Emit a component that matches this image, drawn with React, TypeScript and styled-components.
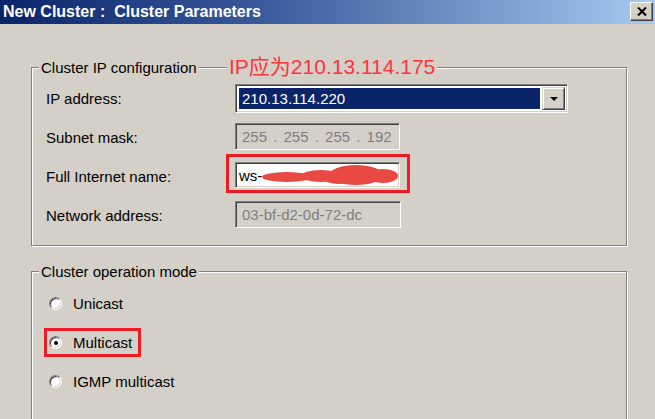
import React from 'react'
import styled, { createGlobalStyle } from 'styled-components'

const GlobalStyle = createGlobalStyle`
  html, body {
    margin: 0;
    padding: 0;
    background: #d4d0c8;
  }
  body {
    font-family: 'Liberation Sans', Arial, sans-serif;
  }
`

const Window = styled.div`
  width: 655px;
  height: 419px;
  overflow: hidden;
  background: #d4d0c8;
  color: #000;
  font-size: 15px;
`

const TitleBar = styled.div`
  height: 24px;
  display: flex;
  align-items: center;
  justify-content: space-between;
  padding: 0 2px 0 3px;
  background: linear-gradient(to right, #0a246a 0%, #3a5a9c 40%, #a6caf0 100%);
`

const Title = styled.span`
  color: #fff;
  font-weight: bold;
  font-size: 16px;
  white-space: pre;
`

const CloseButton = styled.button`
  width: 23px;
  height: 19px;
  padding: 0;
  display: flex;
  align-items: center;
  justify-content: center;
  background: #d4d0c8;
  border: 1px solid;
  border-color: #fff #404040 #404040 #fff;
  box-shadow: inset -1px -1px 0 #808080;
  margin-top: -2px;
`

const Content = styled.div`
  padding: 43px 28px 0 31px;
`

const GroupBox = styled.div<{ $gap?: number }>`
  position: relative;
  margin-top: ${(p) => p.$gap ?? 0}px;
  border: 1px solid #808080;
  box-shadow: 1px 1px 0 #fff, inset 1px 1px 0 #fff;
  padding: 0 14px 15px 14px;
  min-height: 160px;
`

const Legend = styled.div`
  display: table;
  margin: -9px 0 0 -7px;
  padding: 0 2px;
  line-height: 17px;
  background: #d4d0c8;
`

const Annotation = styled.span`
  position: absolute;
  left: 195px;
  top: -12px;
  padding: 0 2px;
  background: #d4d0c8;
  color: #ff3340;
  font-size: 21px;
  line-height: 22px;
  font-family: 'Liberation Sans', 'Noto Sans CJK SC', sans-serif;
`

const FieldGrid = styled.div`
  display: grid;
  grid-template-columns: 189px 1fr;
  grid-auto-rows: 29px;
  row-gap: 10px;
  margin-top: 8px;
`

const Label = styled.span`
  align-self: center;
  line-height: 17px;
`

const sunken = `
  box-sizing: border-box;
  border: 1px solid;
  border-color: #808080 #fff #fff #808080;
  box-shadow: inset 1px 1px 0 #404040, inset -1px -1px 0 #d4d0c8;
`

const Combo = styled.div`
  ${sunken}
  width: 333px;
  height: 29px;
  display: flex;
  align-items: stretch;
  padding: 2px;
  background: #fff;
`

const ComboValue = styled.div`
  flex: 1;
  margin: 1px 2px 1px 1px;
  padding-left: 3px;
  background: #0a246a;
  color: #fff;
  display: flex;
  align-items: center;
`

const DropButton = styled.div`
  width: 21px;
  display: flex;
  align-items: center;
  justify-content: center;
  background: #d4d0c8;
  border: 1px solid;
  border-color: #d4d0c8 #404040 #404040 #d4d0c8;
  box-shadow: inset 1px 1px 0 #fff, inset -1px -1px 0 #808080;
`

const Arrow = styled.span`
  width: 0;
  height: 0;
  border-left: 4px solid transparent;
  border-right: 4px solid transparent;
  border-top: 4px solid #000;
`

const TextField = styled.div<{ $disabled?: boolean; $width: number; $height: number; $marked?: boolean }>`
  ${sunken}
  position: relative;
  width: ${(p) => p.$width}px;
  height: ${(p) => p.$height}px;
  padding-left: ${(p) => (p.$disabled ? 6 : 3)}px;
  display: flex;
  align-items: center;
  background: ${(p) => (p.$disabled ? '#d4d0c8' : '#fff')};
  color: ${(p) => (p.$disabled ? '#808080' : '#000')};
  white-space: pre;

  ${(p) =>
    p.$marked &&
    `
    &::after {
      content: '';
      position: absolute;
      top: -9px;
      left: -10px;
      right: -11px;
      bottom: -6px;
      border: 3px solid #ec1c24;
    }
  `}
`

const IpText = styled.span`
  word-spacing: 2px;
`

const Redaction = styled.svg`
  position: absolute;
  left: 25px;
  top: 1px;
`

const RadioList = styled.div`
  display: flex;
  flex-direction: column;
  align-items: flex-start;
  gap: 16px;
  margin-top: 12px;
  margin-left: 1px;
`

const RadioItem = styled.label<{ $marked?: boolean }>`
  display: inline-flex;
  align-items: center;
  gap: 11px;
  height: 23px;
  padding: 0 6px 0 2px;
  box-sizing: border-box;
  outline: ${(p) => (p.$marked ? '3px solid #ec1c24' : 'none')};
`

const RadioCircle = styled.span<{ $checked?: boolean }>`
  box-sizing: border-box;
  width: 13px;
  height: 13px;
  border-radius: 50%;
  background: #fff;
  border: 1px solid;
  border-color: #808080 #fff #fff #808080;
  box-shadow: inset 1px 1px 0 #404040, inset -1px -1px 0 #d4d0c8;
  display: flex;
  align-items: center;
  justify-content: center;

  &::before {
    content: '';
    width: 4px;
    height: 4px;
    border-radius: 50%;
    background: ${(p) => (p.$checked ? '#000' : 'transparent')};
  }
`

const modes = [
  { label: 'Unicast', checked: false, marked: false },
  { label: 'Multicast', checked: true, marked: true },
  { label: 'IGMP multicast', checked: false, marked: false },
]

export default function App() {
  return (
    <Window>
      <GlobalStyle />
      <TitleBar>
        <Title>{'New Cluster :  Cluster Parameters'}</Title>
        <CloseButton aria-label="Close">
          <svg width="10" height="9" viewBox="0 0 10 9">
            <path d="M1 0.5 L9 8.5 M9 0.5 L1 8.5" stroke="#000" strokeWidth="2" />
          </svg>
        </CloseButton>
      </TitleBar>
      <Content>
        <GroupBox>
          <Legend>Cluster IP configuration</Legend>
          <Annotation>IP应为210.13.114.175</Annotation>
          <FieldGrid>
            <Label>IP address:</Label>
            <Combo>
              <ComboValue>210.13.114.220</ComboValue>
              <DropButton>
                <Arrow />
              </DropButton>
            </Combo>
            <Label>Subnet mask:</Label>
            <TextField $disabled $width={165} $height={27}>
              <IpText>255 . 255 . 255 . 192</IpText>
            </TextField>
            <Label>Full Internet name:</Label>
            <TextField $width={165} $height={26} $marked>
              ws-
              <Redaction width="138" height="22" viewBox="0 0 138 22">
                <g fill="#e94843">
                  <ellipse cx="26" cy="13" rx="25" ry="5" />
                  <ellipse cx="60" cy="12" rx="20" ry="6" />
                  <ellipse cx="95" cy="11" rx="27" ry="10" />
                  <ellipse cx="122" cy="12" rx="15" ry="7" />
                  <ellipse cx="78" cy="14" rx="16" ry="6" />
                </g>
              </Redaction>
            </TextField>
            <Label>Network address:</Label>
            <TextField $disabled $width={166} $height={27}>
              03-bf-d2-0d-72-dc
            </TextField>
          </FieldGrid>
        </GroupBox>
        <GroupBox $gap={25}>
          <Legend>Cluster operation mode</Legend>
          <RadioList>
            {modes.map((m) => (
              <RadioItem key={m.label} $marked={m.marked}>
                <RadioCircle $checked={m.checked} />
                {m.label}
              </RadioItem>
            ))}
          </RadioList>
        </GroupBox>
      </Content>
    </Window>
  )
}
